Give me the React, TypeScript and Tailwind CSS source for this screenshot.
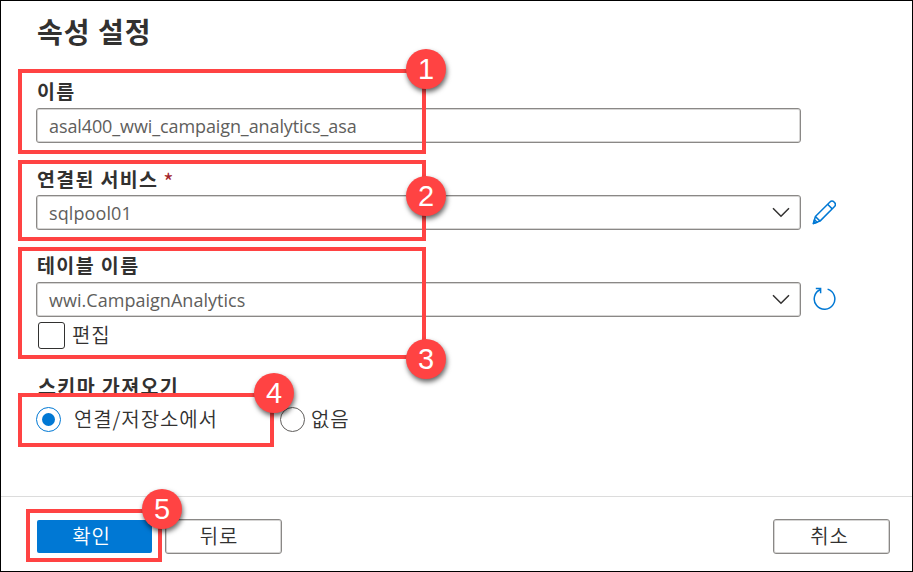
import type { ReactNode } from "react";

const KR = "font-['Noto_Sans_CJK_KR',sans-serif]";
const LATIN = "font-['Open_Sans','Noto_Sans_CJK_KR',sans-serif]";

function Label({ children, className = "" }: { children: ReactNode; className?: string }) {
  return (
    <div className={`flex h-6 items-center whitespace-pre text-[19.5px] font-bold leading-6 text-[#323130] ${className}`}>
      <span className="relative -top-px">{children}</span>
    </div>
  );
}

function Field({ value, tracking, select = false }: { value: string; tracking: string; select?: boolean }) {
  return (
    <div className="flex h-[35px] w-[765px] items-center justify-between rounded-[3px] border border-[#8a8886] pl-3 pr-[10px] shadow-[inset_0_0_0_1px_#d6d5d4]">
      <span className={`${LATIN} ${tracking} relative top-px whitespace-nowrap text-[18px] text-[#605e5c]`}>{value}</span>
      {select && (
        <svg width="18" height="11" viewBox="0 0 18 11" fill="none" stroke="#323130" strokeWidth="1.5">
          <path d="M1 1.2 9 9.2 17 1.2" />
        </svg>
      )}
    </div>
  );
}

function Frame({ n, box, badge }: { n: number; box: string; badge: string }) {
  return (
    <>
      <div className={`absolute border-4 border-[#ff4343] ${box}`} />
      <div
        className={`absolute z-10 flex size-10 items-center justify-center rounded-full bg-[#ff4343] font-['Liberation_Sans',sans-serif] text-[29px] leading-none text-white shadow-[1px_3px_5px_rgba(0,0,0,0.6)] ${badge}`}
      >
        <span>{n}</span>
      </div>
    </>
  );
}

const button =
  "flex h-[35px] w-[117px] items-center justify-center rounded-[3px] border border-[#8a8886] text-[20px] font-[350] tracking-[0.9px] text-[#323130] shadow-[inset_0_0_0_1px_#d6d5d4]";

export default function App() {
  return (
    <div className={`relative flex h-[572px] w-[913px] flex-col overflow-hidden border border-black bg-white ${KR}`}>
      <main className="flex h-[495px] flex-col pl-[35px] pt-[12px]">
        <h1 className="h-9 whitespace-nowrap pl-px text-[28px] font-bold leading-9 tracking-[1px] text-[#323130]">속성 설정</h1>
        <Label className="mt-[31px] pl-px tracking-[1.3px]">이름</Label>
        <div className="mt-1">
          <Field value="asal400_wwi_campaign_analytics_asa" tracking="tracking-[-0.1px]" />
        </div>
        <Label className="mt-6 pl-px tracking-[1.3px]">
          연결된 서비스<span className="pl-[5px] text-[22px] leading-none font-normal text-[#a4262c] relative top-[3px]">*</span>
        </Label>
        <div className="mt-1 flex items-center gap-[11px]">
          <Field value="sqlpool01" tracking="tracking-[0.1px]" select />
          <svg width="24" height="25" viewBox="0 0 24 25" fill="none" stroke="#0078d4" strokeWidth="1.5" strokeLinejoin="round">
            <path d="M1.4 23.5 3.4 16.5 17.7 2.2a3.1 3.1 0 0 1 4.6 4.6L8 21.1Z" />
            <path d="M15.6 4.3l4.6 4.6M3.4 16.5l4.6 4.6M1.4 23.5l1.1-3.8 2.7 2.7z" />
          </svg>
        </div>
        <Label className="mt-6 pl-px tracking-[1.4px]">테이블 이름</Label>
        <div className="mt-1 flex items-center gap-3">
          <Field value="wwi.CampaignAnalytics" tracking="tracking-[0.03px]" select />
          <svg className="relative -top-px" width="24" height="24" viewBox="0 0 24 24" fill="none" stroke="#0078d4" strokeWidth="1.5">
            <path d="M14.6 2.1A10.3 10.3 0 1 1 7.4 2.5" />
            <path d="M2.8 1.5h4.8v4.8" />
          </svg>
        </div>
        <div className="mt-[5px] flex h-[27px] items-center gap-[7px] pl-[2px] text-[20px] font-[350] tracking-[0.9px] text-[#323130]">
          <span className="size-[27px] rounded-[3px] border border-[#323130]" />
          <span className="relative -top-px">편집</span>
        </div>
        <Label className="mt-[26px] pl-[2px] tracking-[1.4px]">스키마 가져오기</Label>
        <div className="mt-[7px] flex h-[26px] items-center text-[20px] font-[350] tracking-[0.9px] text-[#323130]">
          <span className="flex size-[25px] items-center justify-center rounded-full border-[1.5px] border-[#0078d4]">
            <span className="size-[13px] rounded-full bg-[#0078d4]" />
          </span>
          <span className="w-[219px] pl-[13px]">연결/저장소에서</span>
          <span className="size-[25px] rounded-full border-[1.5px] border-[#605e5c]" />
          <span className="pl-[6px]">없음</span>
        </div>
      </main>
      <footer className="flex flex-1 items-start border-t border-[#dcdcdc] pl-[36px] pr-[22px] pt-[22px]">
        <div className="mt-px flex h-[33px] w-[115px] items-center justify-center rounded-[2px] bg-[#0078d4] pr-[6px] pb-px text-[20px] font-[350] tracking-[0.9px] text-white">확인</div>
        <div className={`${button} ml-[13px] pb-px pr-[9px]`}>뒤로</div>
        <div className={`${button} ml-auto pb-px pr-[4px]`}>취소</div>
      </footer>

      <Frame n={1} box="left-[17px] top-[68px] h-[85px] w-[408px]" badge="left-[405px] top-[48px]" />
      <Frame n={2} box="left-[17px] top-[159px] h-[81px] w-[408px]" badge="left-[405px] top-[175px]" />
      <Frame n={3} box="left-[17px] top-[246px] h-[112px] w-[408px]" badge="left-[405px] top-[338px]" />
      <Frame n={4} box="left-[17px] top-[392px] h-[54px] w-[256px]" badge="left-[253px] top-[372px]" />
      <Frame n={5} box="left-[25px] top-[508px] h-[53px] w-[136px]" badge="left-[141px] top-[488px]" />
    </div>
  );
}
